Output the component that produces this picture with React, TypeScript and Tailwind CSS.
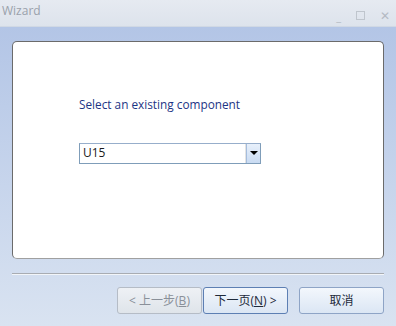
const font = { fontFamily: '"Open Sans", "Noto Sans CJK SC", sans-serif' };

function WinButton({ label, disabled, focused }: { label: React.ReactNode; disabled?: boolean; focused?: boolean }) {
  return (
    <button
      disabled={disabled}
      className={`h-[27px] w-[85px] rounded-[3px] border text-[12px] flex items-center justify-center ${
        disabled
          ? 'border-[#b5bcc6] bg-gradient-to-b from-[#eef1f5] to-[#dfe4ea] text-[#8a9099]'
          : focused
          ? 'border-[#5d7fb3] bg-gradient-to-b from-[#f3f7fc] to-[#dbe6f4] text-[#1e2a3a]'
          : 'border-[#8ea4c6] bg-gradient-to-b from-[#f3f7fc] to-[#dbe6f4] text-[#1e2a3a]'
      }`}
    >
      {label}
    </button>
  );
}

export default function App() {
  return (
    <div className="w-[396px] h-[326px] flex flex-col overflow-hidden" style={font}>
      {/* title bar */}
      <div className="h-[27px] flex items-start justify-between bg-gradient-to-b from-[#e6eaf1] to-[#dde3ec] border-b border-[#d0d8e4]">
        <span className="text-[12px] text-[#9aa1ab] pl-[2px] pt-[2px]">Wizard</span>
        <div className="flex items-center gap-[15px] pr-[6px] pt-[9px] text-[#b4bac3] text-[11px] leading-none">
          <span className="pt-[2px]">_</span>
          <span className="w-[9px] h-[9px] border border-[#bfc5cd]" />
          <span className="text-[12px]">✕</span>
        </div>
      </div>

      {/* body */}
      <div className="flex-1 flex flex-col bg-gradient-to-b from-[#b3c5e6] to-[#d9e3f1] px-[12px] pt-[14px]">
        <div className="h-[218px] bg-white rounded-[5px] border border-[#6b6b6b] border-b-[#a0a0a0] flex flex-col pl-[66px] pt-[57px]">
          <p className="text-[11.8px] text-[#1d3585] leading-none">Select an existing component</p>
          <div className="mt-[32px] w-[182px] h-[21px] flex border border-[#7f9db9] border-t-[#97aecb]">
            <div className="flex-1 flex items-center pl-[3px] text-[12px] text-[#1a1a1a] border-r border-[#e3e3e3]">U15</div>
            <div className="w-[14px] flex items-center justify-center bg-gradient-to-b from-[#e8f0fb] to-[#c9dbf2] border-l border-[#a5bddd]">
              <span className="w-0 h-0 border-l-[4px] border-r-[4px] border-t-[4px] border-l-transparent border-r-transparent border-t-black" />
            </div>
          </div>
        </div>

        <div className="mt-[14px] h-[2px] bg-[#a8acb2] border-b border-[#f2f5f9]" />

        <div className="mt-[12px] flex justify-end">
          <WinButton disabled label={<span>&lt; 上一步(<u>B</u>)</span>} />
          <div className="ml-[1px]">
            <WinButton focused label={<span>下一页(<u>N</u>) &gt;</span>} />
          </div>
          <div className="ml-[11px]">
            <WinButton label="取消" />
          </div>
        </div>
      </div>
    </div>
  );
}
